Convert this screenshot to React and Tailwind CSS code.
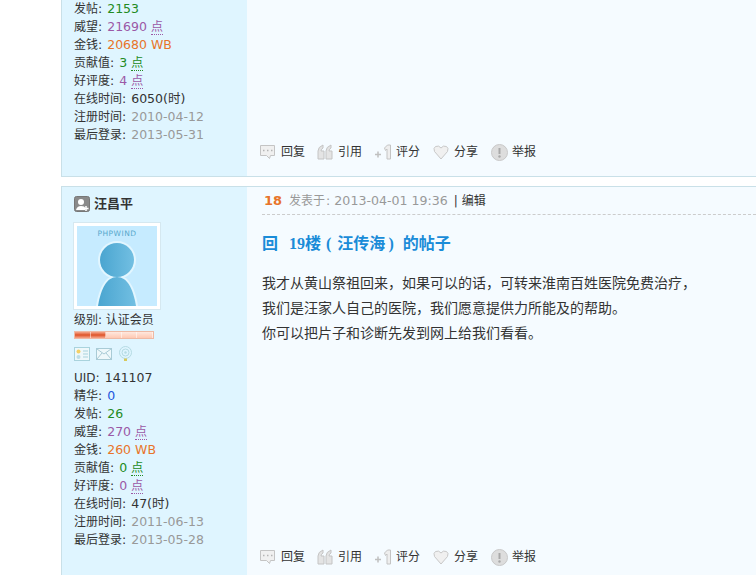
const sans = "font-['DejaVu_Sans','Noto_Sans_CJK_SC',sans-serif]";

const firstStats = [
  ['发帖', '2153', '', 'text-[#228b22]'],
  ['威望', '21690', '点', 'text-[#9b59a6]'],
  ['金钱', '20680 WB', '', 'text-[#e8742a]'],
  ['贡献值', '3', '点', 'text-[#228b22]'],
  ['好评度', '4', '点', 'text-[#9b59a6]'],
  ['在线时间', '6050(时)', '', 'text-[#333333]'],
  ['注册时间', '2010-04-12', '', 'text-[#999999]'],
  ['最后登录', '2013-05-31', '', 'text-[#999999]'],
];

const secondStats = [
  ['UID', '141107', '', 'text-[#333333]'],
  ['精华', '0', '', 'text-[#2255dd]'],
  ['发帖', '26', '', 'text-[#228b22]'],
  ['威望', '270', '点', 'text-[#9b59a6]'],
  ['金钱', '260 WB', '', 'text-[#e8742a]'],
  ['贡献值', '0', '点', 'text-[#228b22]'],
  ['好评度', '0', '点', 'text-[#9b59a6]'],
  ['在线时间', '47(时)', '', 'text-[#333333]'],
  ['注册时间', '2011-06-13', '', 'text-[#999999]'],
  ['最后登录', '2013-05-28', '', 'text-[#999999]'],
];

function Stats({ rows }) {
  return (
    <div className="text-[12.500px] leading-[18px] text-[#333333]">
      {rows.map(([label, value, unit, color]) => (
        <div key={label} className="whitespace-nowrap">
          <span className="text-[12px]">{label}</span>
          <span className="mr-[1px]">: </span>
          <span className={color}>{value}</span>
          {unit && <span className={`${color} ml-1 border-b border-dotted border-current text-[12px]`}>{unit}</span>}
        </div>
      ))}
    </div>
  );
}

function ReplyIcon() {
  return (
    <svg width="17" height="16" viewBox="0 0 17 16">
      <path d="M1.500 1.500h14v10h-4l-1 3-3-3h-6z" fill="#f0f0f0" stroke="#c4c4c4" />
      <path d="M4 6.500h1.500M8 6.500h1.500M12 6.500h1.500" stroke="#b5b5b5" strokeWidth="1.500" />
    </svg>
  );
}

function QuoteIcon() {
  return (
    <svg width="16" height="16" viewBox="0 0 16 16">
      <path d="M1 15V7q0-4 5-6v3q-2 1-2 3h3v8zM9 15V7q0-4 5-6v3q-2 1-2 3h3v8z" fill="#e4e4e4" stroke="#c4c4c4" />
    </svg>
  );
}

function PlusOneIcon() {
  return (
    <svg width="18" height="16" viewBox="0 0 18 16">
      <path d="M1 10.500h6M4 7.500v6" stroke="#c0c0c0" strokeWidth="1.500" />
      <path d="M10.500 4l3-3h3v14h-3.500V5l-1.500 1.500z" fill="#eeeeee" stroke="#c4c4c4" />
    </svg>
  );
}

function HeartIcon() {
  return (
    <svg width="16" height="16" viewBox="0 0 16 16">
      <path d="M8 15L1.500 7.500Q0 4 2.500 2.500 6 1 8 4q2-3 5.500-1.500Q16 4 14.500 7.500z" fill="#f0f0f0" stroke="#c8c8c8" />
    </svg>
  );
}

function ReportIcon() {
  return (
    <svg width="17" height="17" viewBox="0 0 17 17">
      <circle cx="8.500" cy="8.500" r="8" fill="#dddddd" stroke="#c8c8c8" />
      <path d="M8.500 4v6" stroke="#a8a8a8" strokeWidth="2" />
      <circle cx="8.500" cy="12.500" r="1.200" fill="#a8a8a8" />
    </svg>
  );
}

const actions = [
  ['回复', ReplyIcon, 'w-[57px]', ''],
  ['引用', QuoteIcon, 'w-[58px]', 'pl-[1px]'],
  ['评分', PlusOneIcon, 'w-[58px]', ''],
  ['分享', HeartIcon, 'w-[58px]', 'pl-[1px]'],
  ['举报', ReportIcon, '', 'pl-[1px]'],
];

function Actions() {
  return (
    <div className="flex items-center text-[12px] text-[#333333]">
      {actions.map(([label, Icon, width, inset]) => (
        <div key={label} className={`flex items-center ${width}`}>
          <div className={`w-[22px] shrink-0 ${inset}`}><Icon /></div>
          <span>{label}</span>
        </div>
      ))}
    </div>
  );
}

function Avatar() {
  return (
    <div className="h-[88px] w-[88px] border border-[#d5e8f0] bg-white p-[3px]">
      <svg width="80" height="80" viewBox="0 0 80 80" className="block">
        <defs>
          <linearGradient id="figure" x1="0" x2="1" y1="0" y2="0">
            <stop offset="0" stopColor="#4aa5d0" />
            <stop offset="1" stopColor="#72bfe2" />
          </linearGradient>
        </defs>
        <rect width="80" height="80" fill="#c6ebff" />
        <text x="40" y="10" textAnchor="middle" fontSize="7.500" letterSpacing="0.500" fill="#58a9cc" fontFamily="DejaVu Sans">PHPWIND</text>
        <circle cx="40" cy="34" r="19" fill="#e2f6ff" />
        <path d="M19 80C22 61 29 49 40 49s18 12 21 31z" fill="#e2f6ff" />
        <circle cx="40" cy="34" r="17" fill="url(#figure)" />
        <path d="M21 80C24 62 30 51 40 51s16 11 19 29z" fill="url(#figure)" />
      </svg>
    </div>
  );
}

function LevelBar() {
  return (
    <div className="mt-[2px] flex h-[8px] w-[80px] border border-[#eeb9a4]">
      {[1, 2, 3, 4, 5].map((n) => (
        <div
          key={n}
          className={`flex-1 border-r border-white/50 bg-linear-to-b ${
            n < 3 ? 'from-[#f5a58a] via-[#dd5224] to-[#f5a58a]' : 'from-[#ffe8de] to-[#ffc8b2]'
          }`}
        />
      ))}
    </div>
  );
}

function UserIcons() {
  return (
    <div className="mt-[7px] flex items-center gap-[6px]">
      <svg width="16" height="14" viewBox="0 0 16 14">
        <rect x="0.500" y="0.500" width="15" height="13" fill="#eef8fb" stroke="#a9d3dd" />
        <circle cx="4.500" cy="4.500" r="2" fill="#f3d067" />
        <circle cx="4.500" cy="10" r="2" fill="#bcdde6" />
        <path d="M9 4h5M9 7h5M9 10h5" stroke="#a9d3dd" />
      </svg>
      <svg width="16" height="12" viewBox="0 0 16 12">
        <rect x="0.500" y="0.500" width="15" height="11" fill="#eef8fb" stroke="#a9cbd6" />
        <path d="M1 1l7 5 7-5M1 11l5-6M15 11l-5-6" fill="none" stroke="#a9cbd6" />
      </svg>
      <svg width="15" height="15" viewBox="0 0 15 15">
        <circle cx="7.500" cy="6.500" r="6" fill="none" stroke="#b5dbe3" />
        <circle cx="7.500" cy="6.500" r="3.500" fill="none" stroke="#b5dbe3" />
        <circle cx="7.500" cy="6.500" r="1.200" fill="#b5dbe3" />
        <rect x="6" y="12.500" width="3" height="2.500" fill="#d8c95c" />
      </svg>
    </div>
  );
}

function UserIconSmall() {
  return (
    <svg width="16" height="16" viewBox="0 0 16 16">
      <rect x="0.500" y="0.500" width="15" height="15" rx="2" fill="#8a8a8a" stroke="#777777" />
      <circle cx="7" cy="6" r="3" fill="#ffffff" />
      <path d="M2 14q1-4 5-4t4 2v2z" fill="#ffffff" />
      <path d="M12 10v5M9.500 12.500h5" stroke="#ffffff" strokeWidth="1.500" />
    </svg>
  );
}

export default function App() {
  return (
    <div className={`${sans} h-[575px] w-[756px] overflow-hidden bg-white pl-[61px]`}>
      <div className="flex h-[177px] border-b border-l border-[#c9e0e8] bg-[#f5fbff]">
        <div className="w-[185px] shrink-0 bg-[#dff5ff] pl-[12px]">
          <Stats rows={firstStats} />
        </div>
        <div className="flex-1 pl-[12px] pt-[143px]">
          <Actions />
        </div>
      </div>

      <div className="mt-[9px] flex h-[400px] border-l border-t border-[#c9e0e8] bg-[#f5fbff]">
        <div className="w-[185px] shrink-0 bg-[#dff5ff] pl-[12px] pt-[8px]">
          <div className="flex items-center gap-[4px] text-[13px] font-bold leading-[18px] text-[#333333]">
            <UserIconSmall />
            <span>汪昌平</span>
          </div>
          <div className="-ml-[1px] mt-[9px]"><Avatar /></div>
          <div className="mt-[1px] text-[12px] leading-[18px] text-[#333333]">级别: 认证会员</div>
          <LevelBar />
          <UserIcons />
          <div className="mt-[8px]"><Stats rows={secondStats} /></div>
        </div>
        <div className="flex flex-1 flex-col pl-[15px]">
          <div className="flex h-[28px] items-center border-b border-dashed border-[#cccccc] pl-[2px] pt-[1px] text-[13px] text-[#333333]">
            <span className="mr-[7px] font-bold text-[#e8742a]">18</span>
            <span className="text-[12.500px] text-[#999999]">
              <span className="mr-[1px] text-[12px]">发表于</span>
              <span className="text-[12.600px]">: 2013-04-01 19:36</span>
            </span>
            <span className="ml-[6px] text-[12px]">| 编辑</span>
          </div>
          <h2 className="mt-[18px] flex whitespace-pre font-['Liberation_Serif','Noto_Sans_CJK_SC',serif] text-[16px] font-bold leading-[22px] text-[#1a8cd8]">
            <span>回</span>
            <span className="ml-[11px]">19楼</span>
            <span className="ml-[5px] mr-[6px]">(</span>
            <span>汪传海</span>
            <span className="ml-[3px] mr-[9px]">)</span>
            <span>的帖子</span>
          </h2>
          <div className="mt-[16px] text-[14px] leading-[25px] text-[#333333]">
            <p>我才从黄山祭祖回来，如果可以的话，可转来淮南百姓医院免费治疗，</p>
            <p>我们是汪家人自己的医院，我们愿意提供力所能及的帮助。</p>
            <p>你可以把片子和诊断先发到网上给我们看看。</p>
          </div>
          <div className="-ml-[3px] mb-[20px] mt-auto"><Actions /></div>
        </div>
      </div>
    </div>
  );
}
